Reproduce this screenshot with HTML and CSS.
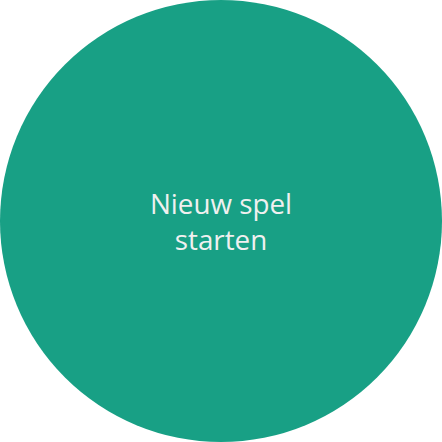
FILE: index.html
```html
<!DOCTYPE html>
<html>
<head>
<meta charset="utf-8">
<link rel="stylesheet" href="styles.css">
</head>
<body>
<div class="circle">
  <span class="label">Nieuw spel<br>starten</span>
</div>
</body>
</html>
```
FILE: styles.css
```css
html, body {
  margin: 0;
  padding: 0;
  background: #ffffff;
}
.circle {
  width: 442px;
  height: 442px;
  border-radius: 50%;
  background: #18a085;
  display: flex;
  align-items: center;
  justify-content: center;
}
.label {
  color: #f0f0f0;
  font-family: "Open Sans", sans-serif;
  font-size: 27.8px;
  line-height: 36px;
  text-align: center;
}
```
